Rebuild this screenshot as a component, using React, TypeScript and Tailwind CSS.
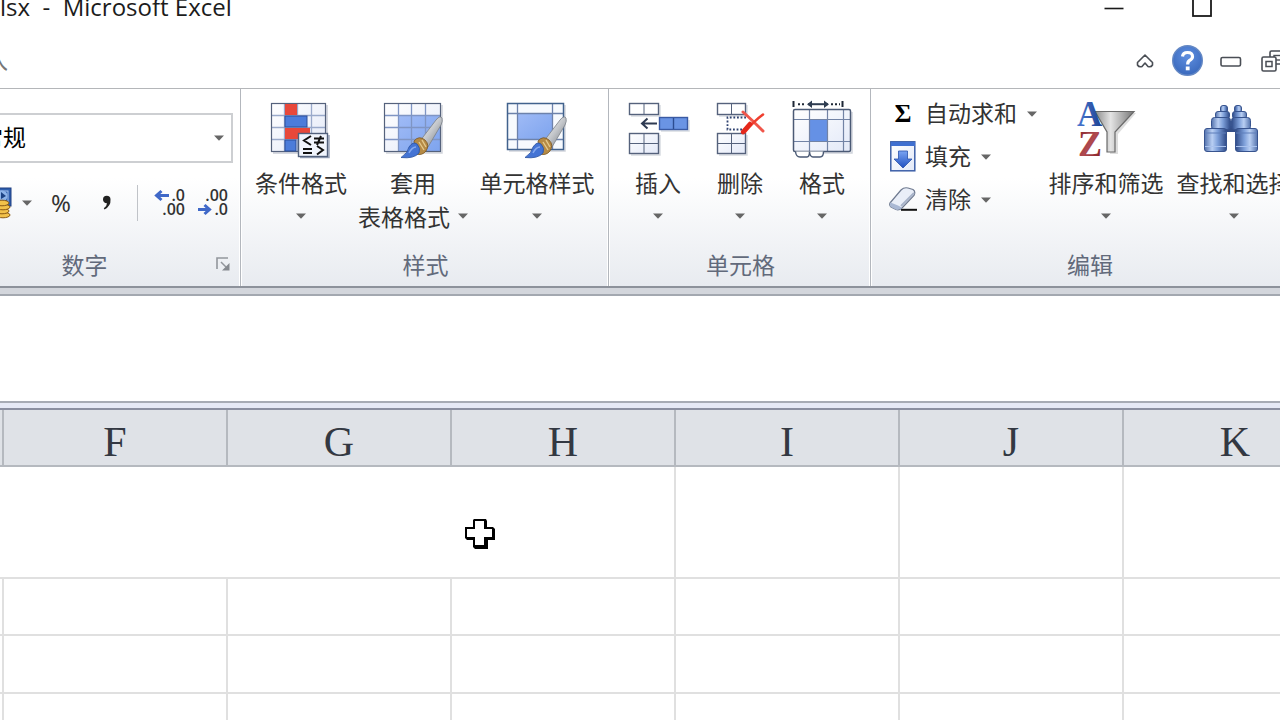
import type { ReactNode } from "react";

const INK = "#55627c";

function Caret() {
  return (
    <svg className="shrink-0" width="10" height="6" viewBox="0 0 10 6" aria-hidden="true">
      <path d="M0 0.5H10L5 5.8Z" fill="#666666" />
    </svg>
  );
}

function Shades() {
  return (
    <svg className="absolute" width="0" height="0" aria-hidden="true">
      <defs>
        <linearGradient id="paleCell" x1="0" y1="0" x2="1" y2="1">
          <stop offset="0" stopColor="#ffffff" />
          <stop offset="1" stopColor="#e3e9f8" />
        </linearGradient>
        <linearGradient id="blueCell" x1="0" y1="0" x2="1" y2="1">
          <stop offset="0" stopColor="#a0bbf6" />
          <stop offset="1" stopColor="#7ea4ee" />
        </linearGradient>
        <linearGradient id="handle" x1="0" y1="0" x2="1" y2="1">
          <stop offset="0" stopColor="#ffffff" />
          <stop offset="0.5" stopColor="#c3c6ca" />
          <stop offset="1" stopColor="#6f757c" />
        </linearGradient>
        <linearGradient id="tube" x1="0" y1="0" x2="1" y2="0">
          <stop offset="0" stopColor="#5473ad" />
          <stop offset="0.35" stopColor="#b9cff3" />
          <stop offset="0.6" stopColor="#7d9fd9" />
          <stop offset="1" stopColor="#2e4a87" />
        </linearGradient>
        <linearGradient id="funnel" x1="0" y1="0" x2="1" y2="0">
          <stop offset="0" stopColor="#8b8b8b" />
          <stop offset="0.4" stopColor="#e4e4e4" />
          <stop offset="1" stopColor="#767676" />
        </linearGradient>
        <linearGradient id="letterA" x1="0" y1="0" x2="1" y2="0">
          <stop offset="0" stopColor="#4b79d2" />
          <stop offset="1" stopColor="#1c3f8f" />
        </linearGradient>
        <linearGradient id="letterZ" x1="0" y1="0" x2="1" y2="1">
          <stop offset="0" stopColor="#7d1f26" />
          <stop offset="0.5" stopColor="#b04a50" />
          <stop offset="1" stopColor="#7b1519" />
        </linearGradient>
        <linearGradient id="arrowFill" x1="0" y1="0" x2="0" y2="1">
          <stop offset="0" stopColor="#7ba4f2" />
          <stop offset="1" stopColor="#1f4fc0" />
        </linearGradient>
        <radialGradient id="help" cx="0.5" cy="0.35" r="0.7">
          <stop offset="0" stopColor="#5f8fe0" />
          <stop offset="1" stopColor="#3766ba" />
        </radialGradient>
      </defs>
    </svg>
  );
}

function Brush() {
  return (
    <g>
      <path d="M37 41L53 20Q57 15 59 18Q60 21 58 25L45 47Z" fill="url(#handle)" stroke="#7b8086" strokeWidth="0.8" />
      <path d="M31 41Q36 35 42 40Q47 45 43 51Q39 56 33 54Z" fill="#b58a45" stroke="#7a5520" strokeWidth="0.8" />
      <path d="M36 42L41 50M39 40L43 47" stroke="#e4c98b" strokeWidth="1.4" />
      <path d="M18 57.500Q25 53 26 47Q30 41 34 44Q38 48 36 53Q31 59 18 57.500Z" fill="#4474d4" stroke="#2a529f" strokeWidth="0.8" />
      <path d="M26 53Q29 47 33 47" stroke="#86a9ef" strokeWidth="1.5" fill="none" />
    </g>
  );
}

function BigIcon({ children }: { children: ReactNode }) {
  return (
    <svg className="shrink-0 overflow-visible" width="60" height="60" viewBox="0 0 60 60" fill="none" aria-hidden="true">
      {children}
    </svg>
  );
}

function ConditionalIcon() {
  return (
    <BigIcon>
      <path d="M2 53H56V5" stroke="#c9cdd6" strokeWidth="1.5" />
      <rect x="0.5" y="3.5" width="54" height="48" fill="url(#paleCell)" />
      <path d="M0.5 15.5H54M0.5 27.5H54M0.5 39.5H54M13.5 3.5V51M26.5 3.5V51M40.5 3.5V51" stroke="#9aaacb" strokeWidth="1.3" />
      <rect x="0.5" y="3.5" width="54" height="48" stroke={INK} strokeWidth="1.2" />
      <rect x="14" y="4" width="12" height="11" fill="#e8483a" />
      <rect x="14" y="16" width="22" height="11" fill="#4c7cda" stroke="#2c4e99" />
      <rect x="14" y="28" width="25" height="11" fill="#e8483a" />
      <rect x="14" y="40" width="11" height="11" fill="#4c7cda" stroke="#2c4e99" />
      <path d="M29 57.500H58V35" stroke="#9aa5ba" strokeWidth="1.5" />
      <rect x="27.5" y="33.5" width="29" height="23" fill="#f1f5fd" stroke="#52617d" strokeWidth="1.4" />
      <path d="M40 36L33 40.5L40 45M32 49H41M32 53H41M43 38.5H53M43 42.5H53M50 36L46 45M46 46L52 50L46 54.5" stroke="#111111" strokeWidth="2" />
    </BigIcon>
  );
}

function TableStyleIcon() {
  return (
    <BigIcon>
      <path d="M3 53H59V5" stroke="#d2d5dc" strokeWidth="1.5" />
      <rect x="1.5" y="3.5" width="56" height="48" fill="url(#paleCell)" />
      <rect x="15" y="15" width="42" height="36" fill="url(#blueCell)" />
      <path d="M1.5 15.5H57M1.5 27.5H57M1.5 39.5H57M15.5 3.5V51M28.5 3.5V51M42.5 3.5V51" stroke="#7f95c4" strokeWidth="1.3" />
      <rect x="1.5" y="3.5" width="56" height="48" stroke={INK} strokeWidth="1.2" />
      <Brush />
    </BigIcon>
  );
}

function CellStyleIcon() {
  return (
    <BigIcon>
      <path d="M2 51H58V5" stroke="#d2d5dc" strokeWidth="1.5" />
      <rect x="0.5" y="3.5" width="56" height="46" fill="#f7fafe" />
      <rect x="10" y="13" width="35" height="26" fill="url(#blueCell)" />
      <path d="M0.5 13.5H56M0.5 39.5H56M10.5 3.5V49M45.5 3.5V49" stroke="#6d82ab" strokeWidth="1.3" />
      <rect x="0.5" y="3.5" width="56" height="46" stroke="#41628d" strokeWidth="1.5" />
      <Brush />
    </BigIcon>
  );
}

function InsertIcon() {
  return (
    <BigIcon>
      <path d="M3 16H32V5M3 55H32V35M33 31H61V20" stroke="#d8dbe1" strokeWidth="1.5" />
      <rect x="1.5" y="3.5" width="29" height="11" fill="#ffffff" stroke={INK} strokeWidth="1.4" />
      <path d="M16 3.5V14" stroke={INK} />
      <rect x="1.5" y="33.5" width="29" height="20" fill="url(#paleCell)" stroke={INK} strokeWidth="1.4" />
      <path d="M16 33.5V53M1.5 43.5H30" stroke={INK} />
      <rect x="31.5" y="17.5" width="28" height="12" fill="#6a94e4" stroke="#3a5aa3" strokeWidth="1.4" />
      <path d="M45.5 18V29" stroke="#2c4c91" strokeWidth="1.4" />
      <path d="M14 23.5H29M19.5 18.5L14 23.5L19.5 28.5" stroke="#2e3a52" strokeWidth="2" />
    </BigIcon>
  );
}

function DeleteIcon() {
  return (
    <BigIcon>
      <path d="M9 16H37V5M9 55H37V35" stroke="#d8dbe1" strokeWidth="1.5" />
      <rect x="7.5" y="3.5" width="28" height="11" fill="#ffffff" stroke={INK} strokeWidth="1.4" />
      <path d="M21.5 3.5V14" stroke={INK} />
      <rect x="7.5" y="33.5" width="28" height="20" fill="url(#paleCell)" stroke={INK} strokeWidth="1.4" />
      <path d="M21.5 33.5V53M7.5 43.5H35" stroke={INK} />
      <path d="M36 17.5H17.5V29.5H36" stroke="#2f4270" strokeWidth="1.8" strokeDasharray="1.8 1.8" />
      <path d="M33 12Q42 20 53 31" stroke="#f0564a" strokeWidth="3" strokeLinecap="round" />
      <path d="M53 14.5Q44 21 35 32" stroke="#ef3e2e" strokeWidth="2.6" strokeLinecap="round" />
      <path d="M40 24L33 32" stroke="#e5281b" strokeWidth="4.5" strokeLinecap="round" />
    </BigIcon>
  );
}

function FormatIcon() {
  return (
    <BigIcon>
      <path d="M1.5 1V7M50.5 1V7" stroke="#1f2836" strokeWidth="2" />
      <path d="M6 4.2H14M39 4.2H48" stroke="#1f2836" strokeWidth="2" strokeDasharray="2 2" />
      <path d="M16 4.2H36" stroke="#2e3c50" strokeWidth="2" />
      <path d="M20 0.5L15 4.2L20 8ZM32 0.5L37 4.2L32 8Z" fill="#2e3c50" />
      <path d="M4 53H60V12" stroke="#d0d4db" strokeWidth="1.5" />
      <rect x="1.5" y="9.5" width="57" height="42" rx="1.5" fill="url(#paleCell)" />
      <rect x="17" y="19" width="18" height="22" fill="#6591e5" />
      <path d="M1.5 19.5H58M1.5 41.5H58M17.5 9.5V51M35.5 9.5V51M51.5 9.5V51" stroke="#7283a5" strokeWidth="1.2" />
      <rect x="1.5" y="9.5" width="57" height="42" rx="1.5" stroke="#4b5a75" strokeWidth="1.5" />
      <path d="M3.5 51.5Q4 57 8 57H15Q17.5 57 17.5 51.5M17.5 51.5Q18 57 21 57H28Q31.5 57 31.5 51.5" fill="#ffffff" stroke="#4b5a75" strokeWidth="1.4" />
    </BigIcon>
  );
}

function SortIcon() {
  return (
    <BigIcon>
      <path d="M22 13L34 35V54H42V34L60 13Z" fill="#dddddd" />
      <path d="M19 11.5H58L39 32V52H31V32Z" fill="url(#funnel)" stroke="#6a6a6a" strokeWidth="1.2" />
      <text x="1" y="26" fontFamily="Liberation Serif, serif" fontWeight="700" fontSize="35" fill="url(#letterA)">A</text>
      <text x="2" y="56" fontFamily="Liberation Serif, serif" fontWeight="700" fontSize="36" fill="url(#letterZ)">Z</text>
    </BigIcon>
  );
}

function BinocularHalf() {
  return (
    <g fill="url(#tube)" stroke="#38548f" strokeWidth="1">
      <rect x="16.5" y="5.5" width="7" height="7" rx="2.5" />
      <rect x="11.5" y="11.5" width="14" height="7" rx="2.5" />
      <rect x="7.5" y="17.5" width="19" height="12" rx="3" />
      <rect x="0.5" y="28.5" width="22" height="23" rx="2.5" />
      <path d="M1 46.5H22" stroke="#a9c2ee" />
      <path d="M1 33H22" stroke="#5f7fba" />
    </g>
  );
}

function FindIcon() {
  return (
    <BigIcon>
      <rect x="22" y="22" width="10" height="10" rx="1" fill="#334d86" />
      <BinocularHalf />
      <g transform="translate(54 0) scale(-1 1)">
        <BinocularHalf />
      </g>
    </BigIcon>
  );
}

function FillIcon() {
  return (
    <svg width="26" height="31" viewBox="0 0 26 31" aria-hidden="true">
      <rect x="0.8" y="0.8" width="24" height="29" fill="url(#paleCell)" stroke="#3c5fa8" strokeWidth="1.5" />
      <rect x="1" y="1" width="24" height="4" fill="#3f6fd0" />
      <path d="M8.5 10H17.5V18H22L13 27L4 18H8.5Z" fill="url(#arrowFill)" stroke="#2a52ab" strokeWidth="0.8" />
    </svg>
  );
}

function EraserIcon() {
  return (
    <svg width="28" height="25" viewBox="0 0 28 25" aria-hidden="true">
      <path d="M12 22.8H28" stroke="#111111" strokeWidth="2" />
      <path d="M1 16L12 3Q15 0 19 1L24 2.500Q27 4.500 25 8.500L13 21Q10 23.500 7 22.500L2 20Q0 18.500 1 16Z" fill="#e9eef8" stroke="#6f7a90" strokeWidth="1.2" />
      <path d="M1.500 15.500L9 18.500Q12 19.500 13 21Q10 23.500 7 22.500L2 20Q0 18.500 1.500 15.500Z" fill="#a9b8d4" />
      <path d="M12 19L25 6" stroke="#a7b3c9" strokeWidth="2" />
    </svg>
  );
}

function BigButton({ icon, label, width }: { icon: ReactNode; label: string[]; width: string }) {
  const split = label.length > 1;
  return (
    <button type="button" className={`flex shrink-0 flex-col items-center ${width}`}>
      {icon}
      <span className="mt-1.5 leading-8 whitespace-nowrap">{label[0]}</span>
      <span className="flex h-9 items-center gap-2 whitespace-nowrap">
        {split && <span>{label[1]}</span>}
        <Caret />
      </span>
    </button>
  );
}

function SmallButton({ icon, label }: { icon: ReactNode; label: string }) {
  return (
    <button type="button" className="flex h-[43px] items-center gap-2 whitespace-nowrap">
      <span className="flex w-7 justify-center">{icon}</span>
      <span className="pr-0.5 pb-1">{label}</span>
      <Caret />
    </button>
  );
}

function Group({ name, className, children, launcher }: { name: string; className: string; children: ReactNode; launcher?: boolean }) {
  return (
    <section
      aria-label={name}
      className={`flex shrink-0 flex-col border-r border-[#b3b7bd] shadow-[1px_0_0_#ffffff,inset_-1px_0_0_#ffffff] ${className}`}
    >
      <div className="flex flex-1 items-start">{children}</div>
      <div className="relative flex h-[42px] items-center justify-center pb-0.5 pl-0.5 text-[#626a7b]">
        {name}
        {launcher && (
          <button type="button" aria-label="数字格式设置" className="absolute right-[10px]">
            <svg width="14" height="14" viewBox="0 0 14 14" fill="none" aria-hidden="true">
              <path d="M1 12V1H12" stroke="#92969c" strokeWidth="1.6" />
              <path d="M5 5L10 10" stroke="#92969c" strokeWidth="1.5" />
              <path d="M13.500 6V13.500H6Z" fill="#85898f" />
            </svg>
          </button>
        )}
      </div>
    </section>
  );
}

function CurrencyIcon() {
  return (
    <svg width="32" height="32" viewBox="0 0 32 32" aria-hidden="true">
      <rect x="0" y="1" width="31" height="18" fill="#2f5fae" stroke="#1f3f80" />
      <rect x="3" y="4" width="25" height="12" fill="none" stroke="#a9c6ef" />
      <circle cx="22" cy="9" r="5.500" fill="#8db4ea" />
      <path d="M21 5L26 9L21 12Z" fill="#1d4384" />
      <g fill="#f2c14a" stroke="#8a5a14">
        <ellipse cx="23" cy="28" rx="7" ry="2.800" />
        <ellipse cx="22" cy="24" rx="7" ry="2.800" />
        <ellipse cx="23" cy="20" rx="7" ry="2.800" />
        <ellipse cx="22" cy="16" rx="7" ry="2.800" />
      </g>
    </svg>
  );
}

function DecimalIcon({ more }: { more: boolean }) {
  return (
    <svg className="overflow-visible" width="31" height="30" viewBox="0 0 31 30" fill="none" aria-hidden="true">
      <g fontFamily="Open Sans, sans-serif" fontWeight="600" fontSize="16" fill="#333333" textAnchor="end">
        <text x="31" y="13">{more ? ".0" : ".00"}</text>
        <text x="31" y="27">{more ? ".00" : ".0"}</text>
      </g>
      {more ? (
        <path d="M2 7.500H15M7.500 3L2.500 7.500L7.500 12" stroke="#3f68c8" strokeWidth="3" />
      ) : (
        <path d="M1 21.500H13M7.500 17L12.500 21.500L7.500 26" stroke="#3f68c8" strokeWidth="3" />
      )}
    </svg>
  );
}

function TitleBar() {
  return (
    <header className="-mt-5 flex h-[54px] shrink-0 items-center">
      <h1 className="text-2xl leading-8 whitespace-pre text-[#1c1c1c] font-['Open_Sans','Noto_Sans',sans-serif]">
        {"lsx  -  Microsoft Excel"}
      </h1>
      <div className="-mr-[54px] ml-auto flex">
        <button type="button" aria-label="最小化" className="flex h-8 w-[88px] items-center justify-center">
          <svg width="20" height="20" viewBox="0 0 20 20" aria-hidden="true">
            <path d="M0.500 11.500H19.500" stroke="#1a1a1a" strokeWidth="1.600" />
          </svg>
        </button>
        <button type="button" aria-label="最大化" className="flex h-8 w-[88px] items-center justify-center">
          <svg width="20" height="20" viewBox="0 0 20 20" aria-hidden="true">
            <rect x="1" y="1" width="18" height="18" fill="none" stroke="#1a1a1a" strokeWidth="1.800" />
          </svg>
        </button>
        <button type="button" aria-label="关闭" className="flex h-8 w-[88px] items-center justify-center" />
      </div>
    </header>
  );
}

function TabRow() {
  const cell = "flex h-9 w-[43px] items-center justify-center";
  return (
    <nav className="flex h-[54px] shrink-0 items-center">
      <a href="#load" className="-ml-[15px] pb-1 text-[#777777]">
        入
      </a>
      <div className="-mr-[15px] ml-auto flex">
        <button type="button" aria-label="功能区最小化" className={cell}>
          <svg width="18" height="14" viewBox="0 0 18 14" fill="none" aria-hidden="true">
            <path d="M9 1L16.500 8.500V11Q15 13.500 12 12.500L9 9L6 12.500Q3 13.500 1.500 11V8.500Z" stroke="#4a4e55" strokeWidth="1.600" strokeLinejoin="round" />
          </svg>
        </button>
        <button type="button" aria-label="帮助" className={cell}>
          <svg className="shrink-0" width="32" height="32" viewBox="0 0 32 32" fill="none" aria-hidden="true">
            <circle cx="15.500" cy="15.500" r="14.800" fill="url(#help)" stroke="#6488c4" strokeWidth="1.400" />
            <path d="M10.500 11.500Q11 7.500 15.500 7.500Q20.500 7.500 20.500 11.500Q20.500 14 17.500 15.500Q15.700 16.500 15.700 19.500" stroke="#ffffff" strokeWidth="3.200" />
            <rect x="13.800" y="21.500" width="3.800" height="3.800" fill="#ffffff" />
          </svg>
        </button>
        <button type="button" aria-label="最小化窗口" className={cell}>
          <svg width="22" height="11" viewBox="0 0 22 11" fill="none" aria-hidden="true">
            <rect x="1" y="1.500" width="19.500" height="8.500" rx="1.500" fill="#ffffff" stroke="#4a4e55" strokeWidth="1.600" />
          </svg>
        </button>
        <button type="button" aria-label="还原窗口" className={cell}>
          <svg className="shrink-0" width="26" height="22" viewBox="0 0 26 22" fill="none" aria-hidden="true">
            <rect x="9" y="1" width="16" height="13" rx="1.500" fill="#ffffff" stroke="#4a4e55" strokeWidth="1.600" />
            <rect x="13" y="5.500" width="8" height="4.500" stroke="#4a4e55" strokeWidth="1.400" />
            <rect x="1" y="7" width="14" height="14" rx="1.500" fill="#ffffff" stroke="#4a4e55" strokeWidth="1.600" />
            <rect x="5" y="11.500" width="6" height="5" stroke="#4a4e55" strokeWidth="1.500" />
          </svg>
        </button>
      </div>
    </nav>
  );
}

function Ribbon() {
  return (
    <div className="flex h-[200px] shrink-0 border-t border-b-2 border-t-[#b4b6b9] border-b-[#8d929b] bg-linear-to-b from-white from-45% to-[#e8ebf0] text-[#333333]">
      <Group name="数字" launcher className="-ml-[73px] w-[314px]">
        <div className="flex flex-col pt-6 pl-[26px]">
          <div className="relative flex h-[50px] w-[280px] items-center">
            <select
              aria-label="数字格式"
              className="h-full w-full appearance-none border-2 border-[#cdcfd2] bg-white pb-1 pl-[25px] text-black"
              defaultValue="常规"
            >
              <option>常规</option>
            </select>
            <span className="pointer-events-none absolute right-[9px] flex">
              <Caret />
            </span>
          </div>
          <div className="mt-5 flex h-10 items-center">
            <button type="button" aria-label="会计数字格式" className="ml-[27px] flex items-center gap-[10px]">
              <CurrencyIcon />
              <Caret />
            </button>
            <button type="button" aria-label="百分比样式" className="ml-[17px] w-6 text-center text-2xl font-['Noto_Sans',sans-serif]">
              %
            </button>
            <button type="button" aria-label="千位分隔样式" className="ml-[26px] flex w-4 justify-center">
              <svg width="10" height="16" viewBox="0 0 10 16" aria-hidden="true">
                <path d="M1 4.500A3.700 3.700 0 0 1 8.500 4.500Q9 11 2.500 14.500L1.800 13.300Q5 11 5 8.300A3.700 3.700 0 0 1 1 4.500Z" fill="#222222" />
              </svg>
            </button>
            <div className="ml-[22px] h-9 w-px bg-[#c0c3c8]" />
            <button type="button" aria-label="增加小数位数" className="ml-4">
              <DecimalIcon more />
            </button>
            <button type="button" aria-label="减少小数位数" className="ml-3">
              <DecimalIcon more={false} />
            </button>
          </div>
        </div>
      </Group>

      <Group name="样式" className="w-[368px]">
        <div className="flex gap-2 pt-[11px] pl-3">
          <BigButton icon={<ConditionalIcon />} label={["条件格式"]} width="w-24" />
          <BigButton icon={<TableStyleIcon />} label={["套用", "表格格式"]} width="w-28" />
          <BigButton icon={<CellStyleIcon />} label={["单元格样式"]} width="w-[120px]" />
        </div>
      </Group>

      <Group name="单元格" className="w-[262px]">
        <div className="flex pt-[11px] pl-2">
          <BigButton icon={<InsertIcon />} label={["插入"]} width="w-[82px]" />
          <BigButton icon={<DeleteIcon />} label={["删除"]} width="w-[82px]" />
          <BigButton icon={<FormatIcon />} label={["格式"]} width="w-[82px]" />
        </div>
      </Group>

      <Group name="编辑" className="w-[437px]">
        <div className="flex w-[175px] flex-col pt-[3px] pl-[18px]">
          <SmallButton
            icon={<span className="text-[26px] leading-8 font-bold text-black font-['Liberation_Serif',serif]">Σ</span>}
            label="自动求和"
          />
          <SmallButton icon={<FillIcon />} label="填充" />
          <SmallButton icon={<EraserIcon />} label="清除" />
        </div>
        <div className="flex gap-2 pt-[11px]">
          <BigButton icon={<SortIcon />} label={["排序和筛选"]} width="w-[120px]" />
          <BigButton icon={<FindIcon />} label={["查找和选择"]} width="w-[120px]" />
        </div>
      </Group>
    </div>
  );
}

const COLUMNS = ["F", "G", "H", "I", "J", "K"];

function Sheet() {
  const line = "border-r-2 border-b-2 border-[#e0e0e0]";
  return (
    <div className="relative flex-1 overflow-hidden">
      <table className="w-[1348px] table-fixed border-separate border-spacing-0">
        <colgroup>
          <col className="w-1" />
          {COLUMNS.map((c) => (
            <col key={c} className="w-[224px]" />
          ))}
        </colgroup>
        <thead>
          <tr className="h-[57px] bg-[#dfe2e7]">
            <th className="border-r-2 border-b-2 border-[#b5b9bf] p-0" />
            {COLUMNS.map((c) => (
              <th
                key={c}
                scope="col"
                className="border-r-2 border-b-2 border-[#b5b9bf] p-0 pt-2 text-[42px] leading-10 font-normal text-[#333842] font-['Liberation_Serif',serif]"
              >
                {c}
              </th>
            ))}
          </tr>
        </thead>
        <tbody>
          <tr className="h-28">
            <td colSpan={4} className={line} />
            <td className={line} />
            <td className={line} />
            <td className={line} />
          </tr>
          {["h-[57px]", "h-[58px]", "h-[58px]"].map((height, i) => (
            <tr key={i} className={height}>
              <td className={line} />
              {COLUMNS.map((c) => (
                <td key={c} className={line} />
              ))}
            </tr>
          ))}
        </tbody>
      </table>
      <svg className="absolute top-[108px] left-[464px]" width="31" height="31" viewBox="0 0 31 31" aria-hidden="true">
        <path d="M10 1H22L23 3V9H29L31 11V22H24V31H11L9 29V22H3L1 20V9H9V2Z" fill="#000000" />
        <path d="M11 3H20V11H28V19H20V27H11V19H3V11H11Z" fill="#ffffff" />
      </svg>
    </div>
  );
}

export default function App() {
  return (
    <div className="flex h-screen w-full flex-col overflow-hidden bg-white text-[23px] leading-8 font-['Noto_Sans_CJK_SC',sans-serif]">
      <Shades />
      <TitleBar />
      <TabRow />
      <Ribbon />
      <div className="h-2 shrink-0 border-b-2 border-[#a3a8b0] bg-[#d3d6dc]" />
      <div className="h-[105px] shrink-0 bg-white" />
      <div className="h-[9px] shrink-0 border-t-2 border-b-2 border-t-[#a7abb4] border-b-[#8b8fa0] bg-[#e6e9f5]" />
      <Sheet />
    </div>
  );
}
